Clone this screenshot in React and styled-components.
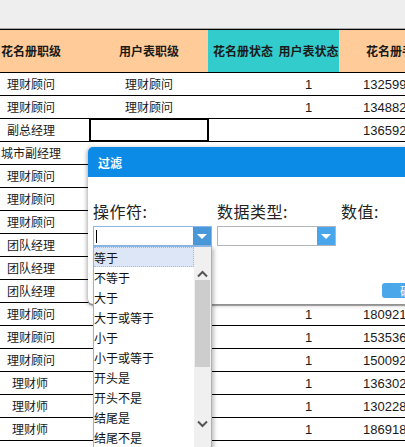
import React from "react";
import styled, { createGlobalStyle } from "styled-components";

// rows 4-16 partly sit under the filter dialog, so their covered cells stay empty
const rows = [
  { a: "理财顾问", b: "理财顾问", d: "1", e: "132599" },
  { a: "理财顾问", b: "理财顾问", d: "1", e: "134882" },
  { a: "副总经理", b: "", d: "", e: "136592", selected: true },
  { a: "城市副经理", b: "", d: "", e: "" },
  { a: "理财顾问", b: "", d: "", e: "" },
  { a: "理财顾问", b: "", d: "", e: "" },
  { a: "理财顾问", b: "", d: "", e: "" },
  { a: "团队经理", b: "", d: "", e: "" },
  { a: "团队经理", b: "", d: "", e: "" },
  { a: "团队经理", b: "", d: "", e: "" },
  { a: "理财顾问", b: "", d: "1", e: "180921" },
  { a: "理财顾问", b: "", d: "1", e: "153536" },
  { a: "理财顾问", b: "", d: "1", e: "150092" },
  { a: "理财师", b: "", d: "1", e: "136302" },
  { a: "理财师", b: "", d: "1", e: "130228" },
  { a: "理财师", b: "", d: "1", e: "186918" },
  { a: "", b: "", d: "", e: "" },
];

const operators = [
  "等于",
  "不等于",
  "大于",
  "大于或等于",
  "小于",
  "小于或等于",
  "开头是",
  "开头不是",
  "结尾是",
  "结尾不是",
];

const GlobalStyle = createGlobalStyle`
  html, body {
    margin: 0;
    padding: 0;
    overflow: hidden;
    background: #fff;
  }
  body {
    font-family: "Noto Sans CJK SC", "Liberation Sans", sans-serif;
    color: #1a1a1a;
  }
`;

const Page = styled.div`
  position: relative;
  width: 405px;
  height: 447px;
  overflow: hidden;
`;

const TopBar = styled.div`
  height: 28px;
  background: #eeeeee;
  border-bottom: 1px solid #a8a8a8;
`;

const Sheet = styled.div`
  border-top: 1px solid #000;
`;

const RowGrid = styled.div`
  display: grid;
  grid-template-columns: 90px 118px 70px 61px 1fr;
  height: ${(p) => (p.$header ? "42px" : "22px")};
  border-bottom: 1px solid #000;
  font-size: 12px;
  line-height: 1;
  white-space: nowrap;
`;

const Cell = styled.div`
  display: flex;
  align-items: center;
  justify-content: ${(p) => p.$justify || "center"};
  padding: ${(p) => p.$pad || "0"};
  background: ${(p) => p.$bg || "transparent"};
  font-weight: ${(p) => (p.$bold ? 700 : 400)};
  font-family: ${(p) =>
    p.$num
      ? `"Liberation Sans", "Noto Sans CJK SC", sans-serif`
      : `"Noto Sans CJK SC", sans-serif`};
  font-size: ${(p) => (p.$num ? "13px" : "12px")};
  overflow: hidden;
  box-sizing: border-box;
  outline: ${(p) => (p.$selected ? "2px solid #000" : "none")};
  outline-offset: -1px;
  position: relative;
  z-index: ${(p) => (p.$selected ? 1 : 0)};
`;

const Dialog = styled.div`
  position: absolute;
  left: 88px;
  top: 147px;
  width: 340px;
  height: 157px;
  background: #fff;
  border-radius: 5px 0 0 5px;
  box-shadow: -1px 1px 4px rgba(0, 0, 0, 0.35), 0 2px 0 #b8b8b8;
  z-index: 5;
`;

const DialogHead = styled.div`
  height: 30px;
  background: #0b8ae6;
  border-radius: 5px 0 0 0;
  display: flex;
  align-items: center;
  padding-left: 10px;
  color: #fff;
  font-size: 12px;
  font-weight: 700;
`;

const DialogBody = styled.div`
  padding: 25px 0 0 5px;
`;

const Fields = styled.div`
  display: grid;
  grid-template-columns: 124px 124px 80px;
`;

const Field = styled.div`
  display: flex;
  flex-direction: column;
  gap: 6px;
`;

const Label = styled.div`
  font-size: 16px;
  line-height: 18px;
  color: #222;
  letter-spacing: 0.5px;
`;

const Select = styled.div`
  width: 119px;
  height: 20px;
  box-sizing: border-box;
  display: flex;
  border: 1px solid ${(p) => (p.$focus ? "#8bb8e6" : "#b4b4bc")};
  background: #fff;
  position: relative;
`;

const SelectText = styled.div`
  flex: 1;
  display: flex;
  align-items: center;
  padding-left: 2px;
`;

const Caret = styled.span`
  width: 1px;
  height: 13px;
  background: #000;
`;

const ArrowBtn = styled.div`
  width: 18px;
  background: ${(p) => (p.$dark ? "#4b98d8" : "#4aa6ea")};
  display: flex;
  align-items: center;
  justify-content: center;
  &::after {
    content: "";
    border-left: 5px solid transparent;
    border-right: 5px solid transparent;
    border-top: 5px solid #fff;
  }
`;

const List = styled.div`
  position: absolute;
  left: -1px;
  top: 19px;
  width: 119px;
  height: 210px;
  background: #fff;
  border: 1px solid #8bb8e6;
  border-bottom: none;
  box-sizing: border-box;
  display: flex;
  box-shadow: 2px 2px 4px rgba(0, 0, 0, 0.25);
`;

const Options = styled.div`
  flex: 1;
  display: flex;
  flex-direction: column;
`;

const Option = styled.div`
  height: 20px;
  flex-shrink: 0;
  display: flex;
  align-items: center;
  font-size: 12px;
  color: #111;
  box-sizing: border-box;
  background: ${(p) => (p.$active ? "#dce6f6" : "transparent")};
  border: 1px dotted ${(p) => (p.$active ? "#9fbde6" : "transparent")};
  border-left: none;
`;

const Scrollbar = styled.div`
  width: 17px;
  background: #f0f0f0;
  display: flex;
  flex-direction: column;
  align-items: center;
`;

const ScrollArrow = styled.div`
  height: 13px;
  width: 17px;
  margin-top: ${(p) => p.$gap}px;
  display: flex;
  align-items: center;
  justify-content: center;
`;

const Thumb = styled.div`
  width: 15px;
  height: 87px;
  background: #cdcdcd;
`;

const Confirm = styled.div`
  position: absolute;
  left: 294px;
  top: 136px;
  width: 44px;
  height: 15px;
  border-radius: 3px;
  background: #4aa8ea;
  color: #fff;
  font-size: 12px;
  display: flex;
  align-items: center;
  padding-left: 18px;
  box-sizing: border-box;
  line-height: 1;
  overflow: hidden;
  white-space: nowrap;
`;

const Chevron = ({ up }) => (
  <svg width="11" height="8" viewBox="0 0 11 8">
    <path
      d={up ? "M1 6.5 L5.5 2 L10 6.5" : "M1 1.5 L5.5 6 L10 1.5"}
      fill="none"
      stroke="#555"
      strokeWidth="2"
    />
  </svg>
);

const firstPad = (t) =>
  t.length > 4 ? "0 0 0 1px" : t.length === 3 ? "0 0 0 12px" : "0 0 0 7px";

const App = () => {
  return (
    <Page>
      <GlobalStyle />
      <TopBar />
      <Sheet>
        <RowGrid $header>
          <Cell $bg="#ffcc99" $bold $justify="flex-start" $pad="0 0 0 1px">
            花名册职级
          </Cell>
          <Cell $bg="#ffcc99" $bold>
            用户表职级
          </Cell>
          <Cell $bg="#33cccc" $bold>
            花名册状态
          </Cell>
          <Cell $bg="#33cccc" $bold>
            用户表状态
          </Cell>
          <Cell $bg="#ffcc99" $bold $justify="flex-start" $pad="0 0 0 27px">
            花名册手
          </Cell>
        </RowGrid>
        {rows.map((r, i) => (
          <RowGrid key={i}>
            <Cell $justify="flex-start" $pad={firstPad(r.a)}>
              {r.a}
            </Cell>
            <Cell $selected={r.selected}>{r.b}</Cell>
            <Cell />
            <Cell $num>{r.d}</Cell>
            <Cell $num $justify="flex-start" $pad="0 0 0 24px">
              {r.e}
            </Cell>
          </RowGrid>
        ))}
      </Sheet>

      <Dialog>
        <DialogHead>过滤</DialogHead>
        <DialogBody>
          <Fields>
            <Field>
              <Label>操作符:</Label>
              <Select $focus>
                <SelectText>
                  <Caret />
                </SelectText>
                <ArrowBtn $dark />
                <List>
                  <Options>
                    {operators.map((o, i) => (
                      <Option key={o} $active={i === 0}>
                        {o}
                      </Option>
                    ))}
                  </Options>
                  <Scrollbar>
                    <ScrollArrow $gap={20}>
                      <Chevron up />
                    </ScrollArrow>
                    <Thumb />
                    <ScrollArrow $gap={50}>
                      <Chevron />
                    </ScrollArrow>
                  </Scrollbar>
                </List>
              </Select>
            </Field>
            <Field>
              <Label>数据类型:</Label>
              <Select>
                <SelectText />
                <ArrowBtn />
              </Select>
            </Field>
            <Field>
              <Label>数值:</Label>
            </Field>
          </Fields>
        </DialogBody>
        <Confirm>确定</Confirm>
      </Dialog>
    </Page>
  );
};

export default App;
